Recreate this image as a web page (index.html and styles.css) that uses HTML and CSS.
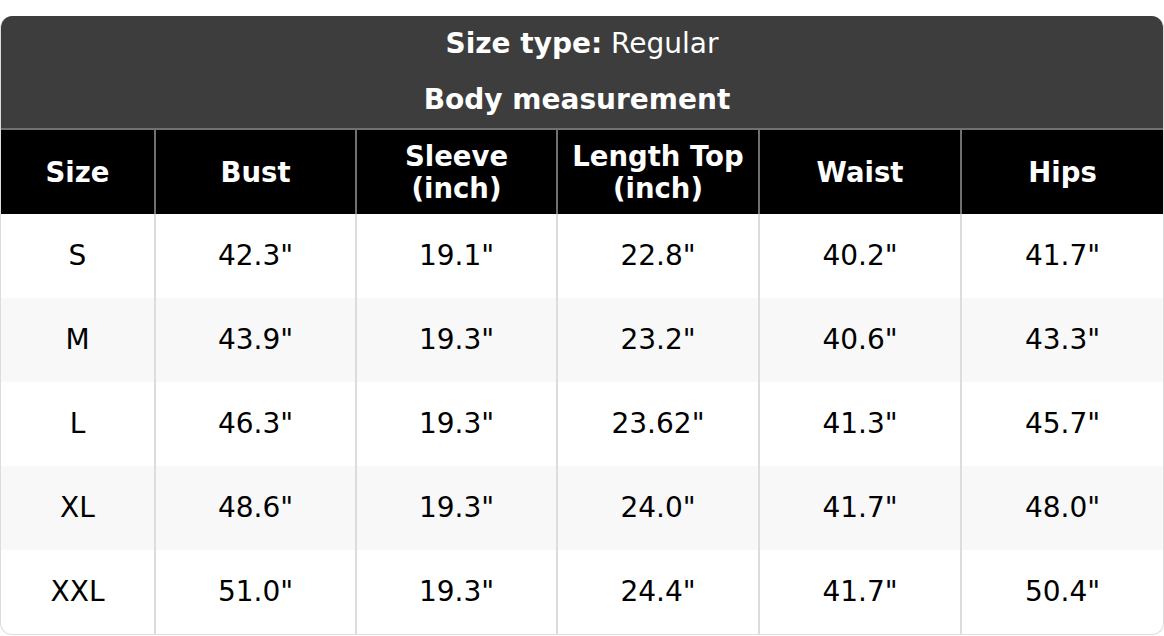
FILE: index.html
```html
<!DOCTYPE html>
<html>
<head>
<meta charset="utf-8">
<link rel="stylesheet" href="styles.css">
</head>
<body>
<div class="chart">
  <div class="top">
    <div class="top-line"><b>Size type:</b> Regular</div>
    <div class="top-line top-second"><b>Body measurement</b></div>
  </div>
  <table class="grid">
    <colgroup>
      <col class="c-size"><col class="c-201"><col class="c-201"><col class="c-202"><col class="c-202"><col>
    </colgroup>
    <thead>
      <tr>
        <th>Size</th>
        <th>Bust</th>
        <th>Sleeve<br>(inch)</th>
        <th>Length Top<br>(inch)</th>
        <th>Waist</th>
        <th>Hips</th>
      </tr>
    </thead>
    <tbody>
      <tr><td>S</td><td>42.3"</td><td>19.1"</td><td>22.8"</td><td>40.2"</td><td>41.7"</td></tr>
      <tr><td>M</td><td>43.9"</td><td>19.3"</td><td>23.2"</td><td>40.6"</td><td>43.3"</td></tr>
      <tr><td>L</td><td>46.3"</td><td>19.3"</td><td>23.62"</td><td>41.3"</td><td>45.7"</td></tr>
      <tr><td>XL</td><td>48.6"</td><td>19.3"</td><td>24.0"</td><td>41.7"</td><td>48.0"</td></tr>
      <tr><td>XXL</td><td>51.0"</td><td>19.3"</td><td>24.4"</td><td>41.7"</td><td>50.4"</td></tr>
    </tbody>
  </table>
</div>
</body>
</html>
```
FILE: styles.css
```css
html, body {
  margin: 0;
  padding: 0;
  background: #ffffff;
}
body {
  padding-top: 16px;
  font-family: "DejaVu Sans", "Liberation Sans", sans-serif;
  font-size: 28px;
  color: #000;
}
.chart {
  border: 1px solid #dcdcdc;
  border-top: none;
  border-radius: 12px;
  overflow: hidden;
}
.top {
  background: #3d3d3d;
  color: #fff;
  text-align: center;
}
.top-line {
  height: 56px;
  line-height: 56px;
}
.top-second {
  padding-right: 10px;
}
.grid {
  width: 100%;
  border-collapse: collapse;
  table-layout: fixed;
}
.c-size {
  width: 154px;
}
.c-201 {
  width: 201px;
}
.c-202 {
  width: 202px;
}
.grid th {
  background: #000;
  color: #fff;
  font-weight: bold;
  font-size: 27.5px;
  line-height: 32px;
  height: 84px;
  padding: 0;
  border-top: 2px solid #707070;
  border-left: 2px solid #707070;
  text-align: center;
  vertical-align: middle;
}
.grid th:first-child,
.grid td:first-child {
  border-left: none;
}
.grid td {
  height: 84px;
  padding: 0;
  text-align: center;
  vertical-align: middle;
  border-left: 2px solid #dcdcdc;
  line-height: 32px;
}
.grid tbody tr:nth-child(even) td {
  background: #f8f8f8;
}
```
